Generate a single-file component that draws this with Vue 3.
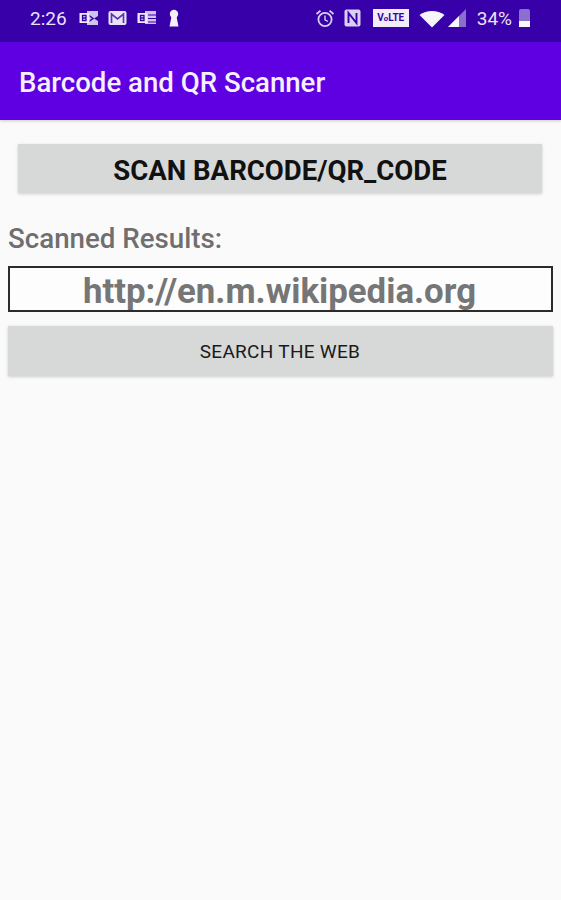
<script setup>
const title = "Barcode and QR Scanner";
const scanned = "http://en.m.wikipedia.org";
</script>

<template>
  <div class="screen">
    <div class="status-bar">
      <div class="status-left">
        <span class="time">2:26</span>
        <svg class="ico" width="20" height="16" viewBox="0 0 20 16">
          <path d="M8 1h11v5l-4 2.500L19 11v4H8z" fill="#cfc3ea" />
          <path d="M10 5.500l4 3-4 3" fill="none" stroke="#3700a8" stroke-width="1.500" />
          <rect x="0.500" y="3" width="10" height="10" fill="#eee9f8" />
          <path d="M3.500 5.500h3.500v5H3.500zM3.500 8h3.500" fill="none" stroke="#3700a8" stroke-width="1.300" />
        </svg>
        <svg class="ico mail" width="19" height="16" viewBox="0 0 19 16">
          <rect x="0.500" y="1" width="18" height="14" rx="2" fill="#e9e3f6" />
          <path d="M3.500 13V4l6 5 6-5v9" fill="none" stroke="#5a35b5" stroke-width="1.700" />
        </svg>
        <svg class="ico cal" width="20" height="16" viewBox="0 0 20 16">
          <path d="M8 1h11v13H8z" fill="#cfc3ea" />
          <path d="M11 5h8M11 8.500h8M11 12h8" stroke="#3700a8" stroke-width="1.200" />
          <rect x="0.500" y="3" width="10" height="10" fill="#eee9f8" />
          <path d="M3.500 5.500h3.500v5H3.500zM3.500 8h3.500" fill="none" stroke="#3700a8" stroke-width="1.300" />
        </svg>
        <svg class="ico" width="12" height="18" viewBox="0 0 12 18">
          <circle cx="6" cy="5" r="4.200" fill="#f4f0fb" />
          <path d="M3.600 7h4.800l2.100 10.500h-9z" fill="#f4f0fb" />
        </svg>
      </div>
      <div class="status-right">
        <svg class="ico clock" width="20" height="19" viewBox="0 0 20 19">
          <circle cx="10" cy="10.500" r="6.600" fill="none" stroke="#d9cff0" stroke-width="1.800" />
          <path d="M10 6.500v4.300l3 1.700" fill="none" stroke="#d9cff0" stroke-width="1.400" />
          <path d="M1.500 5l4-3.400M18.500 5l-4-3.400" stroke="#d9cff0" stroke-width="1.900" />
        </svg>
        <svg class="ico nfc" width="17" height="18" viewBox="0 0 17 18">
          <rect x="0.500" y="0.500" width="16" height="17" rx="2" fill="#d9cff0" />
          <path d="M4.500 14V4l8 10V4" fill="none" stroke="#3700a8" stroke-width="1.900" />
        </svg>
        <span class="volte">V<i>o</i>LTE</span>
        <svg class="ico wifi" width="26" height="19" viewBox="0 0 26 19">
          <path d="M0.500 6C7.500 0.500 18.500 0.500 25.500 6L13 18.500z" fill="#f7f5fc" />
        </svg>
        <svg class="ico signal" width="20" height="20" viewBox="0 0 20 20">
          <path d="M19 1v18H1z" fill="#8b6fce" />
          <path d="M12 8v11H1z" fill="#f7f5fc" />
        </svg>
        <span class="battery-pct">34%</span>
        <div class="battery"><div class="battery-level" :style="{ height: '34%' }"></div></div>
      </div>
    </div>

    <header class="app-bar">{{ title }}</header>

    <main class="content">
      <button class="scan-btn">SCAN BARCODE/QR_CODE</button>
      <p class="results-label">Scanned Results:</p>
      <div class="result-box">{{ scanned }}</div>
      <button class="search-btn">SEARCH THE WEB</button>
    </main>
  </div>
</template>

<style scoped>
.screen {
  width: 561px;
  height: 900px;
  display: flex;
  flex-direction: column;
  background: #fafafa;
  font-family: Roboto, "Liberation Sans", sans-serif;
  overflow: hidden;
}

.status-bar {
  height: 42px;
  display: flex;
  justify-content: space-between;
  align-items: center;
  padding: 0 31px 6px 30px;
  box-sizing: border-box;
  background: #3700a8;
  color: #e9e3f6;
}

.status-left,
.status-right {
  display: flex;
  align-items: center;
}

.ico {
  display: block;
  flex-shrink: 0;
}

.time {
  font-size: 19px;
  margin-right: 12px;
}

.mail {
  margin: 0 10px 0 9px;
}

.cal {
  margin-right: 11px;
}

.clock {
  margin-right: 9px;
}

.nfc {
  margin-right: 12px;
}

.volte {
  width: 36px;
  box-sizing: border-box;
  text-align: center;
  background: #f0ecf9;
  color: #3700a8;
  font-size: 10px;
  font-weight: 700;
  line-height: 17px;
  margin-right: 10px;
}

.volte i {
  font-size: 8px;
}

.wifi {
  margin-right: 2px;
}

.signal {
  margin-right: 10px;
}

.battery-pct {
  font-size: 19px;
  margin-right: 7px;
}

.battery {
  width: 11px;
  height: 18px;
  background: #8b6fce;
  display: flex;
  align-items: flex-end;
  border-radius: 2px 2px 0 0;
}

.battery-level {
  width: 100%;
  background: #f7f5fc;
}

.app-bar {
  height: 78px;
  box-sizing: border-box;
  padding: 2px 19px 0;
  display: flex;
  align-items: center;
  background: #5f00e2;
  color: #f5f0fd;
  font-size: 27.600px;
  font-weight: 500;
  box-shadow: 0 1px 3px rgba(0, 0, 0, 0.2);
}

.content {
  display: flex;
  flex-direction: column;
  padding: 24px 8px 0;
}

.scan-btn,
.search-btn {
  border: none;
  background: #d7d8d8;
  font-family: inherit;
  box-shadow: 0 1px 3px rgba(0, 0, 0, 0.18);
}

.scan-btn {
  height: 49px;
  margin: 0 11px 0 10px;
  padding: 4px 0 0;
  color: #111;
  font-size: 27.550px;
  font-weight: 700;
}

.results-label {
  margin: 30px 0 13px;
  padding-top: 1px;
  height: 29px;
  color: #6f6f6f;
  font-size: 27.700px;
  line-height: 30px;
  font-weight: 500;
}

.result-box {
  height: 46px;
  box-sizing: border-box;
  border: 2px solid #2b2b2b;
  background: #fdfdfd;
  color: #767676;
  font-size: 34.800px;
  font-weight: 700;
  line-height: 47px;
  text-align: center;
  white-space: nowrap;
  padding-right: 2px;
  overflow: hidden;
}

.search-btn {
  height: 50px;
  margin-top: 14px;
  padding: 0 1px 0 0;
  color: #1a1a1a;
  font-size: 19px;
  letter-spacing: 0.3px;
}
</style>

<style>
html,
body {
  margin: 0;
  background: #fafafa;
}
</style>
